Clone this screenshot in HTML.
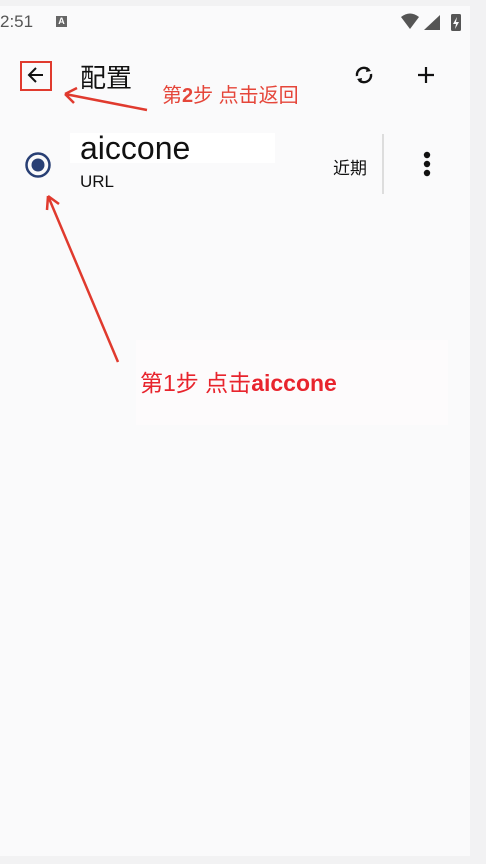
<!DOCTYPE html><html><head><meta charset="utf-8"><style>
body{margin:0;width:486px;height:864px;background:#f2f2f3;position:relative;overflow:hidden;font-family:"Liberation Sans","Noto Sans CJK SC",sans-serif}
.pg{position:absolute;left:0;top:6px;width:470px;height:850px;background:#fafafb}
.a{position:absolute;white-space:nowrap}
</style></head><body>
<div class="pg"></div>
<div class="a" style="left:0;top:12px;font-size:17px;color:#555">2:51</div>
<div class="a" style="left:56px;top:16px;width:11px;height:11px;background:#666;color:#fff;font-size:9px;text-align:center;line-height:11px;font-weight:bold">A</div>
<svg class="a" style="left:400px;top:12px" width="66" height="20"><path d="M1 5 Q10 -2 19 5 L10 17Z" fill="#555"/><path d="M24 18 L40 3 L40 18Z" fill="#555"/><rect x="51" y="2" width="10" height="17" rx="1.5" fill="#555"/><path d="M57 5 L53 12 L56 12 L55 17 L59 10 L56 10Z" fill="#fafafb"/></svg>
<div class="a" style="left:20px;top:61px;width:32px;height:30px;border:2px solid #e03a2e;box-sizing:border-box"></div>
<svg class="a" style="left:26px;top:65px" width="20" height="20"><path d="M17 10H4M10 3L3 10L10 17" stroke="#111" stroke-width="2" fill="none"/></svg>
<div class="a" style="left:80px;top:58px;font-size:26px;color:#111">配置</div>
<svg class="a" style="left:352px;top:63px" width="24" height="24"><path d="M5 13A7 7 0 0 1 17 7M19 11A7 7 0 0 1 7 17" stroke="#111" stroke-width="2.4" fill="none"/><path d="M15 4L19 8L14 9Z M9 20L5 16L10 15Z" fill="#111"/></svg>
<svg class="a" style="left:416px;top:65px" width="20" height="20"><path d="M10 2V18M2 10H18" stroke="#111" stroke-width="2.2"/></svg>
<svg class="a" style="left:60px;top:84px" width="100" height="30"><path d="M87 26L5 10M5 10L17 4M5 10L14 19" stroke="#e03a2e" stroke-width="2.5" fill="none"/></svg>
<div class="a" style="left:162px;top:79px;font-size:20px;color:#e5463a">第<b>2</b>步 点击返回</div>
<div class="a" style="left:70px;top:133px;width:205px;height:30px;background:#fff"></div>
<div class="a" style="left:80px;top:130px;font-size:32px;color:#111">aiccone</div>
<div class="a" style="left:80px;top:172px;font-size:17px;color:#111">URL</div>
<svg class="a" style="left:23px;top:150px" width="30" height="30"><circle cx="15" cy="15" r="11.5" stroke="#283f74" stroke-width="2.5" fill="none"/><circle cx="15" cy="15" r="6.5" fill="#283f74"/></svg>
<div class="a" style="left:333px;top:154px;font-size:17px;color:#111">近期</div>
<div class="a" style="left:382px;top:134px;width:2px;height:60px;background:#ddd"></div>
<svg class="a" style="left:420px;top:150px" width="14" height="30"><circle cx="7" cy="5" r="3.2" fill="#111"/><circle cx="7" cy="14" r="3.2" fill="#111"/><circle cx="7" cy="23" r="3.2" fill="#111"/></svg>
<svg class="a" style="left:40px;top:190px" width="90" height="180"><path d="M78 172L8 6M8 6L19 14M8 6L7 20" stroke="#e03a2e" stroke-width="2.5" fill="none"/></svg>
<div class="a" style="left:136px;top:340px;width:312px;height:85px;background:#fdfbfc"></div>
<div class="a" style="left:140px;top:364px;font-size:23px;color:#e8242d">第1步 点击<b>aiccone</b></div>
</body></html>
